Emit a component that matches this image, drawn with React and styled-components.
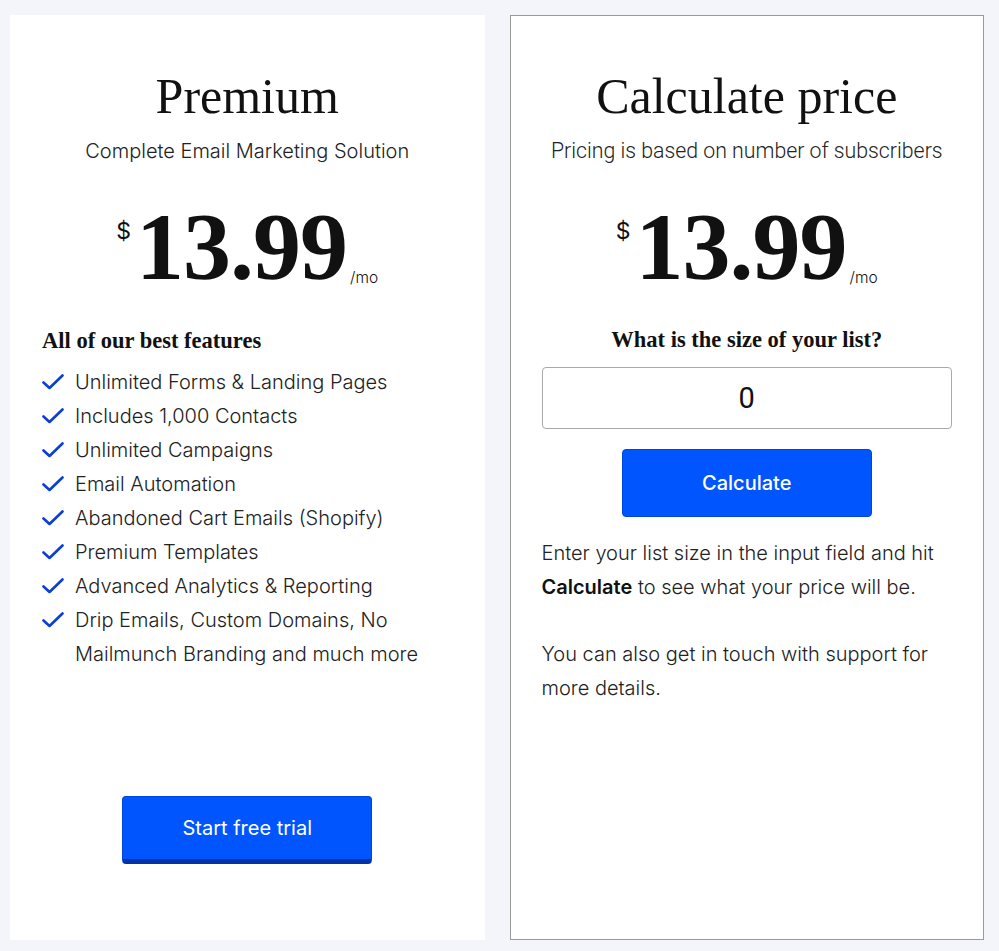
import React from 'react';
import styled, { createGlobalStyle } from 'styled-components';

const GlobalStyle = createGlobalStyle`
    html, body {
        margin: 0;
        padding: 0;
        background: #f4f5fa;
    }
    * { box-sizing: border-box; }
`;

const Page = styled.div`
    display: grid;
    grid-template-columns: 1fr 1fr;
    gap: 25px;
    padding: 15px 15px 11px 10px;
    min-height: 951px;
`;

const Card = styled.div`
    display: flex;
    flex-direction: column;
    align-items: center;
    height: 925px;
    background: #fff;
    border: 1px solid ${p => (p.bordered ? '#9a9a9a' : 'transparent')};
    padding: 50px 31px 75px;
    color: #111;
`;

const Title = styled.h1`
    margin: 0;
    font-family: "Liberation Serif", serif;
    font-weight: 400;
    font-size: 50px;
    line-height: 60px;
    color: #111;
`;

const Subtitle = styled.p`
    margin: 12px 0 0;
    font-family: ${p => (p.roboto ? 'Roboto' : 'Inter')}, sans-serif;
    font-weight: 300;
    font-size: ${p => (p.roboto ? 21.3 : 20)}px;
    line-height: 26px;
    color: #222;
`;

const PriceRow = styled.div`
    display: flex;
    align-items: flex-start;
    margin-top: 33px;
`;

const Dollar = styled.span`
    font-family: Inter, sans-serif;
    font-size: 23px;
    margin-top: 20px;
    margin-right: 5px;
`;

const Amount = styled.span`
    font-family: "Liberation Serif", serif;
    font-weight: 700;
    font-size: 96px;
    line-height: 100px;
    letter-spacing: -1px;
`;

const PerMonth = styled.span`
    font-family: Inter, sans-serif;
    font-weight: 300;
    font-size: 15.5px;
    align-self: flex-end;
    margin-bottom: 10px;
    margin-left: 3px;
`;

const SectionHeading = styled.h3`
    margin: ${p => (p.center ? 30 : 31)}px 0 0;
    align-self: ${p => (p.center ? 'center' : 'flex-start')};
    font-family: "Liberation Serif", serif;
    font-weight: 700;
    font-size: 22.5px;
    line-height: 26px;
`;

const FeatureList = styled.ul`
    list-style: none;
    margin: 11px 0 0;
    padding: 0;
    align-self: stretch;
`;

const Feature = styled.li`
    display: flex;
    align-items: flex-start;
    font-family: Inter, sans-serif;
    font-weight: 300;
    font-size: 20px;
    line-height: 34px;
    color: #222;
`;

const CheckWrap = styled.span`
    flex: 0 0 33px;
    display: flex;
    align-items: center;
    height: 34px;
`;

const Button = styled.button`
    width: 250px;
    height: 68px;
    border: 1px solid #0046d8;
    border-bottom: ${p => (p.raised ? '5px solid #0033a6' : '1px solid #0046d8')};
    border-radius: 4px;
    background: #0055ff;
    color: #fff;
    font-family: Inter, sans-serif;
    font-weight: ${p => (p.raised ? 400 : 500)};
    font-size: 20px;
    padding: 0;
    cursor: pointer;
    margin-top: ${p => (p.bottom ? 'auto' : '20px')};
`;

const SizeInput = styled.input`
    margin-top: 14px;
    width: 100%;
    height: 62px;
    border: 1px solid #a9a9a9;
    border-radius: 4px;
    text-align: center;
    font-family: Roboto, sans-serif;
    font-size: 29px;
    color: #111;
    outline: none;
`;

const Note = styled.p`
    margin: ${p => p.mt}px 0 0;
    align-self: stretch;
    font-family: Inter, sans-serif;
    font-weight: 300;
    font-size: 20px;
    line-height: 34px;
    color: #222;

    strong {
        font-weight: 600;
        color: #111;
    }
`;

const features = [
    'Unlimited Forms & Landing Pages',
    'Includes 1,000 Contacts',
    'Unlimited Campaigns',
    'Email Automation',
    'Abandoned Cart Emails (Shopify)',
    'Premium Templates',
    'Advanced Analytics & Reporting',
    'Drip Emails, Custom Domains, No Mailmunch Branding and much more',
];

function Check() {
    return (
        <svg width="22" height="16" viewBox="0 0 22 16">
            <polyline points="1.5,8.5 7.5,14 20.5,1.5" fill="none" stroke="#0b3fd3" strokeWidth="2.6" strokeLinecap="round" strokeLinejoin="round" />
        </svg>
    );
}

function Price() {
    return (
        <PriceRow>
            <Dollar>$</Dollar>
            <Amount>13.99</Amount>
            <PerMonth>/mo</PerMonth>
        </PriceRow>
    );
}

export default function App() {
    return (
        <>
            <GlobalStyle />
            <Page>
                <Card>
                    <Title>Premium</Title>
                    <Subtitle>Complete Email Marketing Solution</Subtitle>
                    <Price />
                    <SectionHeading>All of our best features</SectionHeading>
                    <FeatureList>
                        {features.map(f => (
                            <Feature key={f}>
                                <CheckWrap><Check /></CheckWrap>
                                <span>{f}</span>
                            </Feature>
                        ))}
                    </FeatureList>
                    <Button raised bottom>Start free trial</Button>
                </Card>
                <Card bordered>
                    <Title>Calculate price</Title>
                    <Subtitle roboto>Pricing is based on number of subscribers</Subtitle>
                    <Price />
                    <SectionHeading center>What is the size of your list?</SectionHeading>
                    <SizeInput defaultValue="0" />
                    <Button>Calculate</Button>
                    <Note mt={19}>
                        Enter your list size in the input field and hit <strong>Calculate</strong> to see what your price will be.
                    </Note>
                    <Note mt={33}>You can also get in touch with support for more details.</Note>
                </Card>
            </Page>
        </>
    );
}
